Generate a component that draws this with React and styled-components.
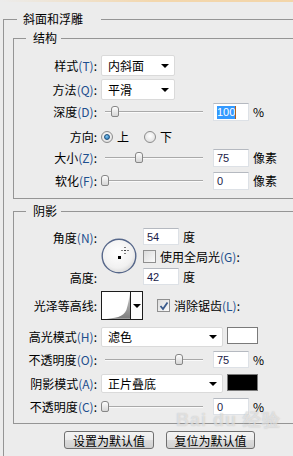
import React from 'react';
import styled, { createGlobalStyle, css } from 'styled-components';

const GlobalStyle = createGlobalStyle`
  html, body {
    margin: 0;
    padding: 0;
    overflow: hidden;
    background: #ececec;
  }
  body {
    font-family: "Noto Sans CJK SC", "Noto Sans", sans-serif;
    font-size: 12px;
    color: #000;
  }
`;

const Page = styled.div`
  position: relative;
  width: 340px;
  height: 456px;
  overflow: hidden;
`;

const TopStrip = styled.div`
  height: 2px;
  background: linear-gradient(to right, #ececec 0%, #f3d7ad 45%, #f3d5a8 100%);
`;

const Group = styled.fieldset`
  margin: ${({ $mt }) => $mt}px 0 0 ${({ $ml }) => $ml}px;
  padding: ${({ $pt }) => $pt || 0}px 0 ${({ $pb }) => $pb || 0}px 0;
  border: 1px solid #959595;
  min-width: 0;
`;

const Legend = styled.legend`
  margin-left: ${({ $ml }) => $ml}px;
  padding: 0 ${({ $pr }) => $pr}px 0 ${({ $pl }) => $pl}px;
  height: 14px;
  line-height: 14px;
  font-size: 12px;
`;

const Row = styled.div`
  display: flex;
  align-items: center;
  height: ${({ $h }) => $h}px;
  margin-top: ${({ $mt }) => $mt || 0}px;
`;

const Label = styled.div`
  flex: none;
  width: 87px;
  box-sizing: border-box;
  padding-right: 4px;
  text-align: right;
  white-space: nowrap;
  line-height: 14px;
`;

const Key = styled.span`
  color: #1d4f8e;
`;

const Select = styled.div`
  flex: none;
  width: ${({ $w }) => $w}px;
  height: ${({ $h }) => $h}px;
  box-sizing: border-box;
  background: #fff;
  border: 1px solid #dadada;
  border-radius: 2px;
  display: flex;
  align-items: center;
  justify-content: space-between;
  padding: 0 5px 0 6px;
  line-height: 14px;
`;

const Arrow = styled.span`
  width: 0;
  height: 0;
  border-left: 4px solid transparent;
  border-right: 4px solid transparent;
  border-top: 4px solid #000;
`;

const Slider = styled.div`
  position: relative;
  flex: none;
  width: 112px;
  height: 18px;
`;

const Track = styled.div`
  position: absolute;
  left: 4px;
  width: 98px;
  top: 8px;
  height: 1px;
  background: #a9a9a9;
  border-bottom: 1px solid #fafafa;
`;

const Thumb = styled.div`
  position: absolute;
  top: 3px;
  width: 8px;
  height: 11px;
  box-sizing: border-box;
  border: 1px solid #868686;
  border-radius: 3px 3px 2px 2px;
  background: linear-gradient(#fdfdfd, #d6d6d6);
`;

const Field = styled.div`
  flex: none;
  width: 36px;
  height: ${({ $h }) => $h || 18}px;
  box-sizing: border-box;
  background: #fff;
  border: 1px solid #dde1e6;
  border-top-color: #b5b9c0;
  padding-left: 3px;
  display: flex;
  align-items: center;
  font-family: "Liberation Sans", Arial, sans-serif;
  font-size: 11px;
  color: #1b1b48;
`;

const Selected = styled.span`
  background: #3399ff;
  color: #fff;
  line-height: 13px;
`;

const Caret = styled.span`
  width: 1px;
  height: 13px;
  background: #b0601a;
`;

const Unit = styled.span`
  margin-left: ${({ $ml }) => $ml ?? 4}px;
  line-height: 14px;
`;

const Radio = styled.span`
  position: relative;
  flex: none;
  width: 12px;
  height: 12px;
  box-sizing: border-box;
  border-radius: 50%;
  border: 1px solid #8c8c8c;
  background: radial-gradient(circle at 50% 40%, #ffffff 0%, #dcdcdc 90%);
  margin-left: ${({ $ml }) => $ml || 0}px;
  ${({ $on }) =>
    $on &&
    css`
      &::after {
        content: '';
        position: absolute;
        left: 2px;
        top: 2px;
        width: 6px;
        height: 6px;
        box-sizing: border-box;
        border-radius: 50%;
        border: 1px solid #1e4f7c;
        background: radial-gradient(circle at 40% 35%, #7fc4ef, #1f6fb0);
      }
    `}
`;

const OptionText = styled.span`
  margin-left: 4px;
  line-height: 14px;
`;

const CheckBox = styled.span`
  flex: none;
  width: 13px;
  height: 13px;
  box-sizing: border-box;
  border: 1px solid #8f8f8f;
  background: linear-gradient(135deg, #dcdcdc, #fafafa);
  display: flex;
  align-items: center;
  justify-content: center;
  margin-left: ${({ $ml }) => $ml || 0}px;
`;

const AngleBlock = styled.div`
  display: flex;
  margin-top: 10px;
  height: 57px;
`;

const AngleLabels = styled.div`
  flex: none;
  display: flex;
  flex-direction: column;
  justify-content: space-between;
  padding-top: 3px;
`;

const Dial = styled.svg`
  flex: none;
  margin-top: 10px;
`;

const AngleFields = styled.div`
  display: flex;
  flex-direction: column;
  margin-left: 6px;
`;

const MiniRow = styled.div`
  display: flex;
  align-items: center;
  margin-top: ${({ $mt }) => $mt || 0}px;
  height: ${({ $h }) => $h}px;
`;

const Contour = styled.div`
  flex: none;
  display: flex;
  width: 42px;
  height: 29px;
  box-sizing: border-box;
  border: 1px solid #1c1c1c;
  background: #fff;
`;

const ContourDrop = styled.div`
  width: 11px;
  border-left: 1px solid #1c1c1c;
  display: flex;
  align-items: center;
  justify-content: center;
  background: #fdfdfd;
`;

const Swatch = styled.div`
  flex: none;
  width: 31px;
  height: 17px;
  box-sizing: border-box;
  margin-left: 4px;
  align-self: flex-start;
  border: 1px solid #7a7a7a;
  background: ${({ $color }) => $color};
`;

const Buttons = styled.div`
  display: flex;
  gap: 12px;
  margin-top: 7px;
  padding-left: 60px;
`;

const Button = styled.button`
  width: ${({ $w }) => $w}px;
  height: 18px;
  padding: 0;
  border: 1px solid #6f6f6f;
  border-radius: 3px;
  background: linear-gradient(#f4f4f4, #ebebeb 48%, #dcdcdc 52%, #d0d0d0);
  font-family: "Noto Sans CJK SC", sans-serif;
  font-size: 12px;
  line-height: 15px;
  color: #000;
`;

const Watermark = styled.div`
  position: absolute;
  left: 176px;
  top: 410px;
  font-family: "Liberation Sans", Arial, sans-serif;
  font-weight: bold;
  font-size: 18px;
  line-height: 20px;
  letter-spacing: 1px;
  color: rgba(255, 255, 255, 0.5);
  text-shadow: 0 0 1px rgba(140, 140, 140, 0.5);
  pointer-events: none;
`;

const SliderControl = ({ at }) => (
  <Slider>
    <Track />
    <Thumb style={{ left: at - 101 - 4 }} />
  </Slider>
);

const LabelText = ({ text, k }) => (
  <>
    {text}
    {k && <Key>({k})</Key>}:
  </>
);

const Check = () => (
  <svg width="10" height="10" viewBox="0 0 10 10">
    <path d="M1.5 5 L4 8 L8.5 1.5" fill="none" stroke="#3a5a8c" strokeWidth="1.8" />
  </svg>
);

export default function App() {
  return (
    <Page>
      <GlobalStyle />
      <TopStrip />
      <Group $mt={10} $ml={3} $pb={60}>
        <Legend $ml={13} $pl={6} $pr={18}>斜面和浮雕</Legend>

        <Group $mt={5} $ml={9} $pt={10} $pb={8}>
          <Legend $ml={12} $pl={7} $pr={4}>结构</Legend>
          <Row $h={21}>
            <Label><LabelText text="样式" k="T" /></Label>
            <Select $w={74} $h={21}>内斜面<Arrow /></Select>
          </Row>
          <Row $h={21} $mt={3}>
            <Label><LabelText text="方法" k="Q" /></Label>
            <Select $w={74} $h={21}>平滑<Arrow /></Select>
          </Row>
          <Row $h={18} $mt={3}>
            <Label><LabelText text="深度" k="D" /></Label>
            <SliderControl at={115} />
            <Field><Selected>100</Selected><Caret /></Field>
            <Unit>%</Unit>
          </Row>
          <Row $h={18} $mt={7}>
            <Label><LabelText text="方向" /></Label>
            <Radio $on />
            <OptionText>上</OptionText>
            <Radio $ml={15} />
            <OptionText>下</OptionText>
          </Row>
          <Row $h={18} $mt={3}>
            <Label><LabelText text="大小" k="Z" /></Label>
            <SliderControl at={139} />
            <Field>75</Field>
            <Unit>像素</Unit>
          </Row>
          <Row $h={18} $mt={5}>
            <Label><LabelText text="软化" k="F" /></Label>
            <SliderControl at={105} />
            <Field>0</Field>
            <Unit>像素</Unit>
          </Row>
        </Group>

        <Group $mt={5} $ml={9} $pb={8}>
          <Legend $ml={12} $pl={7} $pr={4}>阴影</Legend>
          <AngleBlock>
            <AngleLabels>
              <Label><LabelText text="角度" k="N" /></Label>
              <Label><LabelText text="高度" /></Label>
            </AngleLabels>
            <Dial width="36" height="36" viewBox="0 0 36 36">
              <defs>
                <radialGradient id="dialFill" cx="45%" cy="40%" r="65%">
                  <stop offset="0%" stopColor="#ffffff" />
                  <stop offset="70%" stopColor="#f1f1f1" />
                  <stop offset="100%" stopColor="#d4d4d4" />
                </radialGradient>
              </defs>
              <circle cx="18" cy="18" r="16.8" fill="url(#dialFill)" stroke="#56678a" strokeWidth="1.4" />
              <rect x="17" y="18" width="3" height="3" fill="#000" />
              <path d="M24 9 V10 M24 12 V13 M24 15 V16 M20.5 12.5 H21.5 M23.5 12.5 H24.5 M26.5 12.5 H27.5" stroke="#000" strokeWidth="1" />
            </Dial>
            <AngleFields>
              <MiniRow $h={17}>
                <Field $h={17}>54</Field>
                <Unit>度</Unit>
              </MiniRow>
              <MiniRow $h={13} $mt={5}>
                <CheckBox />
                <OptionText><LabelText text="使用全局光" k="G" /></OptionText>
              </MiniRow>
              <MiniRow $h={17} $mt={5}>
                <Field $h={17}>42</Field>
                <Unit>度</Unit>
              </MiniRow>
            </AngleFields>
          </AngleBlock>

          <Row $h={29} $mt={6}>
            <Label>光泽等高线:</Label>
            <Contour>
              <svg width="29" height="27" viewBox="0 0 29 27">
                <defs>
                  <linearGradient id="curveFill" x1="0" y1="0" x2="0" y2="1">
                    <stop offset="0%" stopColor="#cfcfcf" />
                    <stop offset="100%" stopColor="#7d7d7d" />
                  </linearGradient>
                </defs>
                <path d="M0 27 C14 27 22 25 25 18 C27 12 28 5 29 0 L29 27 Z" fill="url(#curveFill)" />
              </svg>
              <ContourDrop><Arrow /></ContourDrop>
            </Contour>
            <CheckBox $ml={14}><Check /></CheckBox>
            <OptionText><LabelText text="消除锯齿" k="L" /></OptionText>
          </Row>

          <Row $h={20} $mt={7}>
            <Label><LabelText text="高光模式" k="H" /></Label>
            <Select $w={122} $h={20}>滤色<Arrow /></Select>
            <Swatch $color="#ffffff" />
          </Row>
          <Row $h={17} $mt={4}>
            <Label><LabelText text="不透明度" k="O" /></Label>
            <SliderControl at={179} />
            <Field $h={17}>75</Field>
            <Unit>%</Unit>
          </Row>
          <Row $h={19} $mt={6}>
            <Label><LabelText text="阴影模式" k="A" /></Label>
            <Select $w={122} $h={19}>正片叠底<Arrow /></Select>
            <Swatch $color="#000000" />
          </Row>
          <Row $h={17} $mt={5}>
            <Label><LabelText text="不透明度" k="C" /></Label>
            <SliderControl at={105} />
            <Field $h={17}>0</Field>
            <Unit>%</Unit>
          </Row>
        </Group>

        <Buttons>
          <Button $w={90}>设置为默认值</Button>
          <Button $w={89}>复位为默认值</Button>
        </Buttons>
      </Group>
      <Watermark>Bai du 经验</Watermark>
    </Page>
  );
}
